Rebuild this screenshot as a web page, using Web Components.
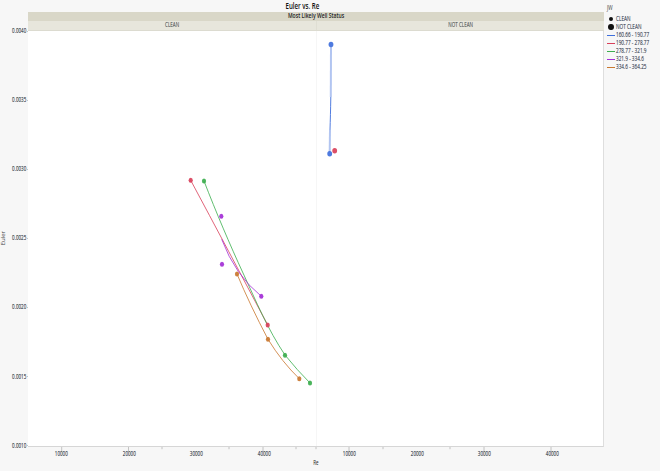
<!doctype html>
<html><head><meta charset="utf-8"><title>Euler vs. Re</title>
<style>html,body{margin:0;background:#f7f7f7}</style></head>
<body><euler-report></euler-report>
<script>
const FONT='"Open Sans","Liberation Sans",sans-serif';
const FRINGE='-.35px 0 rgba(0,150,255,.35),.35px 0 rgba(255,130,0,.35)';
class TxtLabel extends HTMLElement{
  constructor(){super();this.attachShadow({mode:'open'}).innerHTML=`<style>
  :host{display:inline-block;white-space:nowrap;font:var(--fs,6.5px)/1 ${FONT};color:var(--c,#2c3440);
  transform:scaleX(var(--sx,.7));transform-origin:var(--o,center);text-shadow:var(--sh,${FRINGE})}
  </style><slot></slot>`}
}
customElements.define('txt-label',TxtLabel);

class YAxis extends HTMLElement{
  constructor(){super();const vals=['0.0040','0.0035','0.0030','0.0025','0.0020','0.0015','0.0010'];
  this.attachShadow({mode:'open'}).innerHTML=`<style>
  :host{display:flex;height:100%}
  .name{width:10px;display:flex;align-items:center;justify-content:center}
  .name span{writing-mode:vertical-rl;transform:rotate(180deg);display:flex}
  .name txt-label{--o:center;--sx:.8}
  .ticks{flex:1;display:flex;flex-direction:column;justify-content:space-between}
  .t{height:0;display:flex;align-items:center;justify-content:flex-end}
  .t i{width:3px;height:1px;background:#c4c4c4;margin-left:1px;flex:none}
  .t txt-label{--o:right}
  </style><div class="name"><span><txt-label style="--c:#444;--sh:none;--fs:6px">Euler</txt-label></span></div>
  <div class="ticks">${vals.map(v=>`<div class="t"><txt-label>${v}</txt-label><i></i></div>`).join('')}</div>`}
}
customElements.define('y-axis',YAxis);

class XAxis extends HTMLElement{
  constructor(){super();
  const major=[61.7,128.5,263,349,484,551], minor=[162,229,296,316,383,450];
  const ticks=major.map(x=>`<line x1="${x-28}" x2="${x-28}" y1="0" y2="4"/>`).join('')+minor.map(x=>`<line x1="${x-28}" x2="${x-28}" y1="0" y2="2.2"/>`).join('');
  const cell=`<span><txt-label>10000</txt-label></span><span><txt-label>20000</txt-label></span><span><txt-label>30000</txt-label></span><span><txt-label>40000</txt-label></span>`;
  this.attachShadow({mode:'open'}).innerHTML=`<style>
  :host{display:block}
  svg{display:block;stroke:#b5b5b5;stroke-width:.8}
  .labels{display:flex}
  .labels span{width:67.4px;flex:none;height:7px;display:flex;align-items:center;justify-content:center}
  .labels .gap{width:18.4px}
  .name{display:flex;justify-content:center;align-items:center;height:7px;margin-top:2px;padding-right:0}
  .name txt-label{--c:#222;--sh:none}
  </style><svg width="576" height="4">${ticks}</svg>
  <div class="labels">${cell}<span class="gap"></span>${cell}</div>
  <div class="name"><txt-label>Re</txt-label></div>`}
}
customElements.define('x-axis',XAxis);

class FacetHeader extends HTMLElement{
  constructor(){super();this.attachShadow({mode:'open'}).innerHTML=`<style>
  :host{display:grid;grid-template-columns:1fr 1fr;grid-template-rows:9px 9px;background:#e7e6dc;border-bottom:1px solid #dcdbd0;box-sizing:border-box;height:19px}
  .top{grid-column:1/3;background:#d9d7c8;display:flex;align-items:center;justify-content:center}
  .top txt-label{--fs:6.5px;--sx:.78;--c:#222;--sh:none;font-weight:600}
  .c{display:flex;align-items:center;justify-content:center}
  .c+.c{border-left:1px solid #dfded3}
  .c txt-label{--c:#555}
  </style><div class="top"><txt-label>Most Likely Well Status</txt-label></div>
  <div class="c"><txt-label>CLEAN</txt-label></div><div class="c"><txt-label>NOT CLEAN</txt-label></div>`}
}
customElements.define('facet-header',FacetHeader);

class FacetPane extends HTMLElement{
  constructor(){super();this.attachShadow({mode:'open'}).innerHTML=`<style>
  :host{display:block;background:#fff;height:415px}
  </style><slot></slot>`}
}
customElements.define('facet-pane',FacetPane);

class PlotArea extends HTMLElement{
  constructor(){super();
  const pt=(x,y,c,r=2.1,s=2.5)=>`<ellipse cx="${x}" cy="${y}" rx="${r}" ry="${s}" fill="${c}" fill-opacity=".92"/>`;
  const B='#3f6fdc',R='#d9405a',G='#3cae4e',P='#a32fd6',O='#c9772f';
  const line=(d,c,w=.95,o=.85)=>`<path d="${d}" fill="none" stroke="${c}" stroke-width="${w}" stroke-opacity="${o}"/>`;
  const left=
    line('M190.7 180.3Q228 250 267.7 325',R)+
    line('M204 181C216 212 230 245 243 273S268 330 285 355Q297 370 310 383',G)+
    line('M221.7 239.3Q235 275 261.3 296.3',P)+
    line('M237 274Q250 305 268 339.3Q282 362 299.3 378.7',O)+
    pt(190.7,180.3,R)+pt(267.7,325,R)+pt(204,181,G)+pt(285,355.3,G)+pt(310,383,G)+
    pt(221.3,216.3,P)+pt(222,264.3,P)+pt(261.3,296.3,P)+pt(237,274,O)+pt(268,339.3,O)+pt(299.3,378.7,O);
  const right=
    line('M331 47L330.8 97',B,2,.4)+
    line('M330 130L329.7 152',B,2,.4)+
    line('M330.8 97C330.6 110 330.3 120 330 130',B,1,.9)+
    pt(331,44.5,B,2.4,2.7)+pt(329.7,153.7,B,2.4,2.7)+pt(334.7,150.7,R,2.4,2.7);
  this.attachShadow({mode:'open'}).innerHTML=`<style>
  :host{display:flex;border-right:1px solid #dedede;border-bottom:1px solid #d6d6d6;height:415px;width:575px}
  facet-pane{width:288px;flex:none}
  facet-pane+facet-pane{border-left:1px solid #f6f6f6;width:286px}
  svg{display:block;overflow:visible}
  </style>
  <facet-pane><svg viewBox="28 31 288 415" width="288" height="415">${left}</svg></facet-pane>
  <facet-pane><svg viewBox="317 31 287 415" width="287" height="415">${right}</svg></facet-pane>`}
}
customElements.define('plot-area',PlotArea);

class ChartLegend extends HTMLElement{
  constructor(){super();
  const rows=[['#3f6fdc','160.66 - 190.77'],['#d9405a','190.77 - 278.77'],['#3cae4e','278.77 - 321.9'],['#a32fd6','321.9 - 334.6'],['#c9772f','334.6 - 364.25']];
  this.attachShadow({mode:'open'}).innerHTML=`<style>
  :host{display:block;padding:4px 0 0 3px}
  .h{height:8px;display:flex;align-items:center;margin-bottom:3px}
  .r{height:8px;display:flex;align-items:center}
  .m{width:8px;display:flex;justify-content:center;flex:none;margin-right:1px}
  .d{border-radius:50%;background:#111}
  .l{width:8px;height:1px;flex:none;margin-right:1px}
  txt-label{--o:left;--sx:.72;--c:#3a4256}
  </style>
  <div class="h"><txt-label style="--c:#333;--sh:none">JW</txt-label></div>
  <div class="r"><span class="m"><i class="d" style="width:4px;height:4px"></i></span><txt-label>CLEAN</txt-label></div>
  <div class="r"><span class="m"><i class="d" style="width:5.5px;height:6px"></i></span><txt-label>NOT CLEAN</txt-label></div>
  ${rows.map(([c,t])=>`<div class="r"><i class="l" style="background:${c}"></i><txt-label>${t}</txt-label></div>`).join('')}`}
}
customElements.define('chart-legend',ChartLegend);

class EulerReport extends HTMLElement{
  constructor(){super();this.attachShadow({mode:'open'}).innerHTML=`<style>
  :host{display:grid;grid-template-columns:28px 576px 56px;grid-template-rows:12px 19px 416px 24px;width:660px;height:471px;overflow:hidden;background:#f7f7f7}
  .title{grid-column:1/3;display:flex;align-items:center;justify-content:center}
  .title txt-label{--fs:8.5px;--sx:.72;--c:#111;--sh:none;font-weight:600}
  chart-legend{grid-column:3;grid-row:1/5}
  facet-header{grid-column:2;grid-row:2}
  y-axis{grid-column:1;grid-row:3;height:415px}
  plot-area{grid-column:2;grid-row:3}
  x-axis{grid-column:2;grid-row:4}
  </style>
  <div class="title"><txt-label>Euler vs. Re</txt-label></div>
  <facet-header></facet-header>
  <y-axis></y-axis><plot-area></plot-area><x-axis></x-axis>
  <chart-legend></chart-legend>`}
}
customElements.define('euler-report',EulerReport);
</script>
</body></html>
